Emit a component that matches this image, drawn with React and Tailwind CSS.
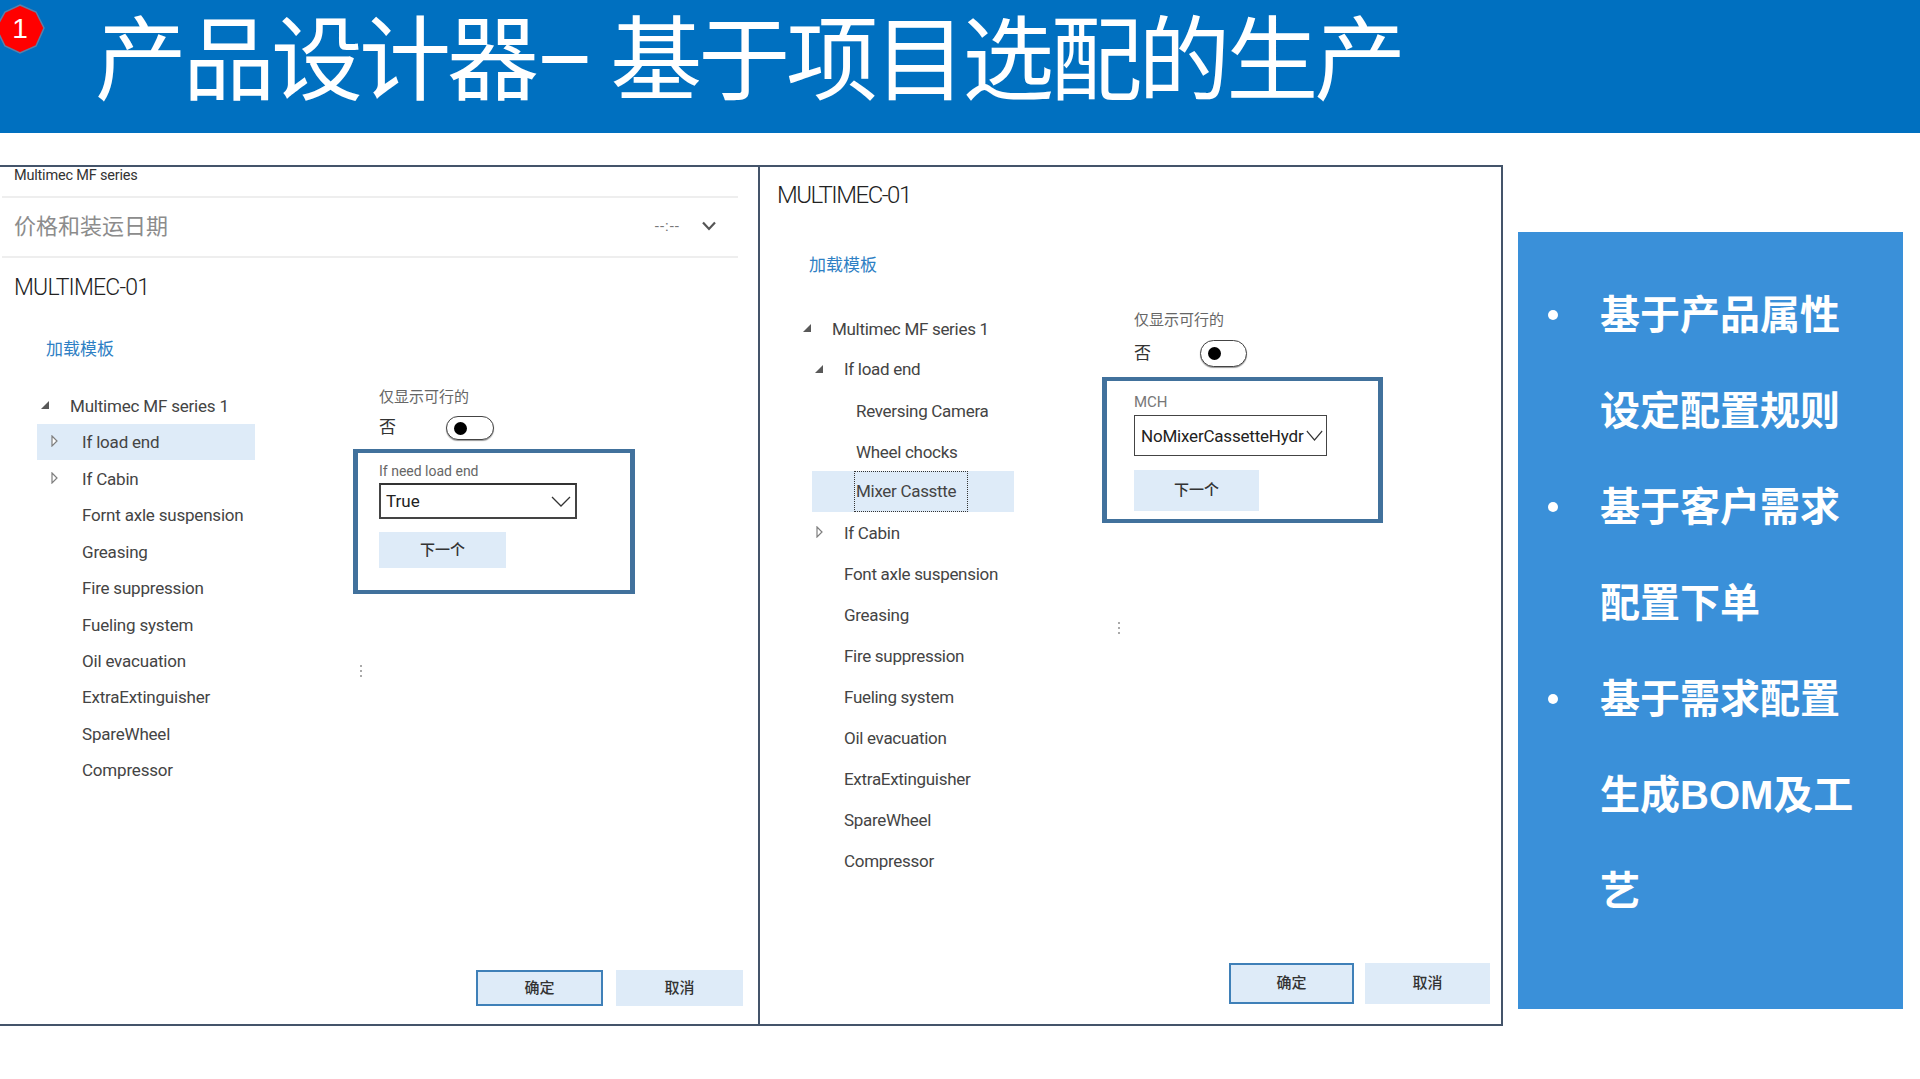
const LEFT_TREE = ['Fornt axle suspension', 'Greasing', 'Fire suppression', 'Fueling system', 'Oil evacuation', 'ExtraExtinguisher', 'SpareWheel', 'Compressor']
const RIGHT_TREE = ['Font axle suspension', 'Greasing', 'Fire suppression', 'Fueling system', 'Oil evacuation', 'ExtraExtinguisher', 'SpareWheel', 'Compressor']
const BULLETS = [
    ['基于产品属性', '设定配置规则'],
    ['基于客户需求', '配置下单'],
    ['基于需求配置', '生成BOM及工', '艺'],
]

function Expanded() {
    return (
        <svg width="10" height="10" viewBox="0 0 10 10" className="shrink-0 -mt-[3px]">
            <path d="M9 1V9H1Z" fill="#595959" />
        </svg>
    )
}

function Collapsed() {
    return (
        <svg width="7" height="12" viewBox="0 0 7 12" className="shrink-0 -mt-[4px]">
            <path d="M1 1L6 6L1 11Z" fill="#fff" stroke="#7f7f7f" strokeWidth="1.2" />
        </svg>
    )
}

function Chevron({ w = 20, h = 11 }) {
    return (
        <svg width={w} height={h} viewBox="0 0 20 11" preserveAspectRatio="none" className="shrink-0">
            <path d="M1 1L10 10L19 1" fill="none" stroke="#333" strokeWidth="1.3" />
        </svg>
    )
}

function Toggle({ className }) {
    return (
        <div className={`flex items-center pl-[7px] rounded-full border border-[#444] shadow-[0_1px_1px_#999] bg-white ${className}`}>
            <div className="w-[13px] h-[13px] rounded-full bg-black" />
        </div>
    )
}

function Gripper({ className }) {
    return (
        <div className={`flex flex-col gap-[3px] w-[2px] ${className}`}>
            <div className="w-[2px] h-[2px] bg-[#aaa]" />
            <div className="w-[2px] h-[2px] bg-[#aaa]" />
            <div className="w-[2px] h-[2px] bg-[#aaa]" />
        </div>
    )
}

function FooterButton({ label, primary, className }) {
    return (
        <button className={`bg-[#deebf8] text-[#333] text-[15px] font-medium ${primary ? 'border-2 border-[#3f80b8]' : ''} ${className}`}>
            {label}
        </button>
    )
}

function LeftPanel() {
    return (
        <section className="w-[760px] shrink-0 flex flex-col border-r-2 border-[#44546a]">
            <div className="mr-[20px] ml-[2px] h-[31px] border-b-2 border-[#eeeeee] pl-[12px] pt-[1px] text-[14.5px] leading-[16px] tracking-[-0.2px] text-[#333]">
                Multimec MF series
            </div>
            <div className="mr-[20px] ml-[2px] h-[60px] border-b-2 border-[#eeeeee] pl-[12px] pr-[22px] pb-[2px] flex items-center">
                <span className="text-[22px] text-[#8c8c8c]">价格和装运日期</span>
                <span className="ml-auto text-[15px] tracking-[1px] text-[#777]">--:--</span>
                <svg width="14" height="10" viewBox="0 0 14 10" className="ml-[22px]">
                    <path d="M1 1.5L7 8L13 1.5" fill="none" stroke="#555" strokeWidth="2.2" />
                </svg>
            </div>
            <div className="h-[60px] pl-[14px] flex items-center text-[23px] font-light tracking-[-0.8px] text-[#222]">MULTIMEC-01</div>
            <div className="mt-[19px] h-[24px] pl-[46px] text-[17px] leading-[24px] text-[#2e80c4]">加载模板</div>
            <div className="mt-[26px] flex">
                <div className="w-[353px] shrink-0 pl-[37px] text-[17px] tracking-[-0.2px] text-[#444]">
                    <div className="h-[37px] flex items-center pt-[2px]">
                        <span className="ml-[3px] w-[30px] flex"><Expanded /></span>
                        <span>Multimec MF series 1</span>
                    </div>
                    <div className="h-[36px] w-[218px] bg-[#deebf8] flex items-center pt-[2px]">
                        <span className="ml-[14px] w-[31px] flex"><Collapsed /></span>
                        <span>If load end</span>
                    </div>
                    <div className="h-[37px] flex items-center pt-[2px]">
                        <span className="ml-[14px] w-[31px] flex"><Collapsed /></span>
                        <span>If Cabin</span>
                    </div>
                    {LEFT_TREE.map(name => (
                        <div key={name} className="h-[36.4px] flex items-center pl-[45px] pt-[2px]">{name}</div>
                    ))}
                </div>
                <div className="flex-1 min-w-0 pt-[1px]">
                    <div className="h-[18px] pl-[26px] text-[15px] leading-[18px] text-[#666]">仅显示可行的</div>
                    <div className="mt-[10px] h-[24px] pl-[26px] flex items-center">
                        <span className="text-[17px] text-[#333] w-[67px]">否</span>
                        <Toggle className="w-[48px] h-[24px]" />
                    </div>
                    <div className="mt-[9px] w-[282px] h-[145px] border-x-[5px] border-y-[4px] border-[#41719c] pl-[21px]">
                        <div className="mt-[10px] h-[16px] text-[14px] leading-[16px] text-[#666]">If need load end</div>
                        <div className="mt-[4px] w-[198px] h-[36px] border-2 border-[#444] border-t-[#333] flex items-center pl-[5px] pr-[4px] pt-[2px] text-[17px] text-[#222]">
                            <span>True</span>
                            <span className="ml-auto -mt-[2px] flex"><Chevron /></span>
                        </div>
                        <button className="block mt-[13px] w-[127px] h-[36px] bg-[#deebf8] text-[15px] font-medium text-[#333]">下一个</button>
                    </div>
                    <Gripper className="mt-[71px] ml-[7px]" />
                </div>
            </div>
            <div className="mt-auto pb-[18px] pr-[15px] flex justify-end gap-[13px]">
                <FooterButton label="确定" primary className="w-[127px] h-[36px]" />
                <FooterButton label="取消" className="w-[127px] h-[36px]" />
            </div>
        </section>
    )
}

function RightPanel() {
    return (
        <section className="w-[743px] shrink-0 flex flex-col border-r-2 border-[#44546a]">
            <div className="h-[56px] pl-[17px] flex items-center text-[24px] font-light tracking-[-1.5px] text-[#222]">MULTIMEC-01</div>
            <div className="mt-[30px] h-[24px] pl-[49px] text-[17px] leading-[24px] text-[#2e80c4]">加载模板</div>
            <div className="mt-[31px] flex">
                <div className="w-[342px] shrink-0 text-[17px] tracking-[-0.3px] text-[#444]">
                    <div className="h-[41px] flex items-center pt-[2px]">
                        <span className="ml-[42px] w-[30px] flex"><Expanded /></span>
                        <span>Multimec MF series 1</span>
                    </div>
                    <div className="h-[41px] flex items-center pt-[1px]">
                        <span className="ml-[54px] w-[30px] flex"><Expanded /></span>
                        <span>If load end</span>
                    </div>
                    <div className="h-[41px] flex items-center pl-[96px] pt-[2px]">Reversing Camera</div>
                    <div className="h-[41px] flex items-center pl-[96px] pt-[2px]">Wheel chocks</div>
                    <div className="h-[41px] ml-[52px] w-[202px] bg-[#deebf8] flex items-center pl-[42px] -mt-[1px]">
                        <span className="h-full px-[1px] pt-[1px] flex items-center border border-dotted border-[#333] w-[114px]">Mixer Casstte</span>
                    </div>
                    <div className="h-[42px] flex items-center pt-[2px]">
                        <span className="ml-[56px] w-[28px] flex"><Collapsed /></span>
                        <span>If Cabin</span>
                    </div>
                    {RIGHT_TREE.map(name => (
                        <div key={name} className="h-[41px] flex items-center pl-[84px] pt-[1px]">{name}</div>
                    ))}
                </div>
                <div className="flex-1 min-w-0">
                    <div className="mt-[3px] h-[18px] ml-[32px] text-[15px] leading-[18px] text-[#666]">仅显示可行的</div>
                    <div className="mt-[11px] h-[27px] ml-[32px] flex items-center">
                        <span className="text-[17px] text-[#333] w-[66px]">否</span>
                        <Toggle className="w-[47px] h-[27px]" />
                    </div>
                    <div className="mt-[10px] w-[281px] h-[146px] border-x-[5px] border-y-[4px] border-[#41719c] pl-[27px]">
                        <div className="mt-[12px] h-[18px] text-[15px] leading-[18px] text-[#777]">MCH</div>
                        <div className="mt-[4px] w-[193px] h-[41px] border border-[#444] flex items-center pl-[6px] pr-[3px] pt-[2px] text-[17px] tracking-[-0.2px] text-[#222]">
                            <span className="whitespace-nowrap">NoMixerCassetteHydr</span>
                            <span className="ml-auto -mt-[2px] flex"><Chevron w={17} h={11} /></span>
                        </div>
                        <button className="block mt-[14px] w-[125px] h-[41px] bg-[#deebf8] text-[15px] font-medium text-[#333]">下一个</button>
                    </div>
                    <Gripper className="mt-[99px] ml-[16px]" />
                </div>
            </div>
            <div className="mt-auto pb-[20px] pr-[11px] flex justify-end gap-[11px]">
                <FooterButton label="确定" primary className="w-[125px] h-[41px]" />
                <FooterButton label="取消" className="w-[125px] h-[41px]" />
            </div>
        </section>
    )
}

function Aside() {
    return (
        <aside className="ml-[15px] mt-[67px] w-[385px] h-[777px] bg-[#3a90d9] pt-[35px] text-white text-[40px] font-bold leading-[96px] font-['Liberation_Sans','Noto_Sans_CJK_SC',sans-serif]">
            {BULLETS.map(lines => (
                <div key={lines[0]} className="flex">
                    <div className="w-[82px] shrink-0 flex justify-end pr-[42px] h-[96px] items-center">
                        <div className="w-[10px] h-[10px] rounded-full bg-white" />
                    </div>
                    <div className="whitespace-nowrap">
                        {lines.map(line => <div key={line}>{line}</div>)}
                    </div>
                </div>
            ))}
        </aside>
    )
}

export default function App() {
    return (
        <div className="relative w-[1920px] h-[1079px] overflow-hidden bg-white font-['Roboto','Noto_Sans_CJK_SC',sans-serif]">
            {/* Title bar */}
            <header className="h-[133px] bg-[#0070c0] pl-[95px] text-white text-[92px] tracking-[-4px] leading-[123px] whitespace-nowrap">
                产品设计器– 基于项目选配的生产
            </header>
            <svg width="46" height="50" viewBox="0 0 46 50" className="absolute left-0 top-[4px]">
                <polygon points="20,1 36,8 44,24 36,42 20,49 5,42 -4,24 5,8" fill="#ff0000" stroke="#5b7fa8" strokeWidth="1.5" />
                <text x="20" y="34" textAnchor="middle" fontSize="28" fill="#fff" fontFamily="Liberation Sans">1</text>
            </svg>

            <main className="flex items-start mt-[32px]">
                <div className="flex h-[861px] border-y-2 border-[#44546a]">
                    <LeftPanel />
                    <RightPanel />
                </div>
                <Aside />
            </main>
        </div>
    )
}
